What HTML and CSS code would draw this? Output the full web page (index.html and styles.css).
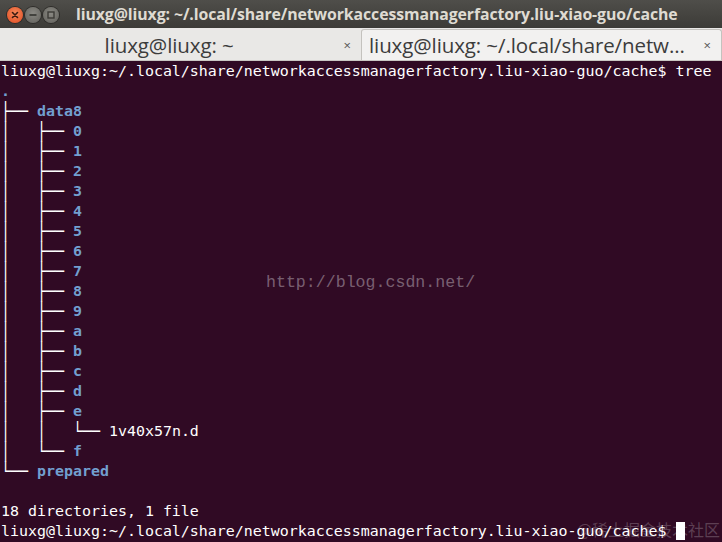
FILE: index.html
```html
<!DOCTYPE html>
<html>
<head>
<meta charset="utf-8">
<link rel="stylesheet" href="styles.css">
</head>
<body>
<div class="window">
  <div class="titlebar">
    <div class="controls">
      <span class="btn close"><svg width="16" height="16" viewBox="0 0 16 16"><path d="M5.5 5.5 L10.5 10.5 M10.5 5.5 L5.5 10.5" stroke="#3a1a10" stroke-width="1.6" stroke-linecap="round"/></svg></span>
      <span class="btn"><svg width="16" height="16" viewBox="0 0 16 16"><path d="M4.5 8 H11.5" stroke="#3c3b37" stroke-width="1.8"/></svg></span>
      <span class="btn"><svg width="16" height="16" viewBox="0 0 16 16"><rect x="5" y="5" width="6" height="6" fill="none" stroke="#3c3b37" stroke-width="1.4"/></svg></span>
    </div>
    <div class="title">liuxg@liuxg: ~/.local/share/networkaccessmanagerfactory.liu-xiao-guo/cache</div>
  </div>
  <div class="tabbar">
    <div class="tab inactive"><span class="tab-label">liuxg@liuxg: ~</span><span class="tab-x">×</span></div>
    <div class="tab active"><span class="tab-label">liuxg@liuxg: ~/.local/share/netw...</span><span class="tab-x">×</span></div>
  </div>
  <div class="term">
    <div class="row">liuxg@liuxg:~/.local/share/networkaccessmanagerfactory.liu-xiao-guo/cache$ tree</div>
    <div class="row"><span class="dir">.</span></div>
    <div class="row"><span class="tr">├──</span> <span class="dir">data8</span></div>
    <div class="row"><span class="tr">│   ├──</span> <span class="dir">0</span></div>
    <div class="row"><span class="tr">│   ├──</span> <span class="dir">1</span></div>
    <div class="row"><span class="tr">│   ├──</span> <span class="dir">2</span></div>
    <div class="row"><span class="tr">│   ├──</span> <span class="dir">3</span></div>
    <div class="row"><span class="tr">│   ├──</span> <span class="dir">4</span></div>
    <div class="row"><span class="tr">│   ├──</span> <span class="dir">5</span></div>
    <div class="row"><span class="tr">│   ├──</span> <span class="dir">6</span></div>
    <div class="row"><span class="tr">│   ├──</span> <span class="dir">7</span></div>
    <div class="row"><span class="tr">│   ├──</span> <span class="dir">8</span></div>
    <div class="row"><span class="tr">│   ├──</span> <span class="dir">9</span></div>
    <div class="row"><span class="tr">│   ├──</span> <span class="dir">a</span></div>
    <div class="row"><span class="tr">│   ├──</span> <span class="dir">b</span></div>
    <div class="row"><span class="tr">│   ├──</span> <span class="dir">c</span></div>
    <div class="row"><span class="tr">│   ├──</span> <span class="dir">d</span></div>
    <div class="row"><span class="tr">│   ├──</span> <span class="dir">e</span></div>
    <div class="row"><span class="tr">│   │   └──</span> 1v40x57n.d</div>
    <div class="row"><span class="tr">│   └──</span> <span class="dir">f</span></div>
    <div class="row"><span class="tr">└──</span> <span class="dir">prepared</span></div>
    <div class="row"> </div>
    <div class="row">18 directories, 1 file</div>
    <div class="row">liuxg@liuxg:~/.local/share/networkaccessmanagerfactory.liu-xiao-guo/cache$ <span class="cursor"> </span></div>
    <div class="wm-url">http://blog.csdn.net/</div>
    <div class="wm-juejin">@稀土掘金技术社区</div>
  </div>
</div>
</body>
</html>
```

FILE: styles.css
```css
html, body {
  margin: 0;
  padding: 0;
  background: #300a24;
}
.window {
  width: 722px;
  height: 542px;
  overflow: hidden;
  display: flex;
  flex-direction: column;
}
.titlebar {
  height: 28px;
  flex: 0 0 28px;
  display: flex;
  align-items: center;
  background: linear-gradient(#4f4e4a, #3c3b37);
}
.controls {
  display: flex;
  gap: 2px;
  padding-left: 7px;
  padding-top: 1px;
}
.btn {
  width: 16px;
  height: 16px;
  border-radius: 50%;
  background: radial-gradient(circle at 50% 40%, #8a8983, #5f5e59);
  box-shadow: 0 0 0 1px #2e2d2a;
  display: flex;
}
.btn.close {
  background: radial-gradient(circle at 50% 40%, #f58a5c, #e0491f);
}
.title {
  margin-left: 17px;
  font-family: "Open Sans", "DejaVu Sans", sans-serif;
  font-weight: 700;
  font-size: 15.85px;
  color: #dfdbd2;
  white-space: nowrap;
  letter-spacing: -0.1px;
}
.tabbar {
  height: 33px;
  flex: 0 0 33px;
  display: flex;
  align-items: flex-end;
  background: #e9e8e6;
  border-bottom: 1px solid #c9c7c3;
  box-sizing: border-box;
}
.tab {
  height: 31px;
  box-sizing: border-box;
  display: flex;
  align-items: center;
  font-family: "Open Sans", "DejaVu Sans", sans-serif;
  font-size: 20.5px;
  color: #3c3c3c;
}
.tab.inactive {
  width: 361px;
  justify-content: flex-end;
  padding-right: 10px;
}
.tab.inactive .tab-label {
  margin-right: 110px;
}
.tab.active {
  width: 361px;
  background: #f2f1f0;
  border: 1px solid #c4c2be;
  border-bottom: none;
  border-radius: 3px 3px 0 0;
  padding-left: 7px;
}
.tab-label {
  white-space: nowrap;
  letter-spacing: -0.1px;
}
.tab.active .tab-label {
  flex: 1;
}
.tab-x {
  font-size: 13px;
  color: #555;
  padding-right: 10px;
}
.tab.inactive .tab-x {
  padding-right: 0;
}
.term {
  flex: 1;
  position: relative;
  background: #300a24;
  padding-left: 1px;
  font-family: "DejaVu Sans Mono", monospace;
  font-size: 14.95px;
  color: #ffffff;
}
.row {
  height: 20px;
  line-height: 20px;
  white-space: pre;
}
.dir {
  color: #729fcf;
  font-weight: 700;
}
.tr {
  display: inline-block;
  transform: scaleY(1.16);
}
.cursor {
  background: #ffffff;
}
.wm-url {
  position: absolute;
  left: 266px;
  top: 212px;
  font-family: "Liberation Mono", monospace;
  font-size: 16.6px;
  color: rgba(255, 255, 255, 0.36);
  white-space: nowrap;
}
.wm-juejin {
  position: absolute;
  right: 2px;
  bottom: 1px;
  font-family: "Noto Sans CJK SC", sans-serif;
  font-size: 16px;
  color: rgba(255, 255, 255, 0.22);
  white-space: nowrap;
}
```
